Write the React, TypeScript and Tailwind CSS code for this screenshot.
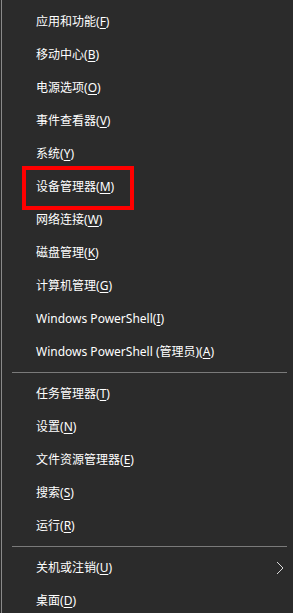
const font = { fontFamily: '"Noto Sans", "Noto Sans CJK SC", sans-serif' }

type Item = { label: string; key: string; arrow?: boolean }

const group1: Item[] = [
  { label: '应用和功能', key: 'F' },
  { label: '移动中心', key: 'B' },
  { label: '电源选项', key: 'O' },
  { label: '事件查看器', key: 'V' },
  { label: '系统', key: 'Y' },
  { label: '设备管理器', key: 'M' },
  { label: '网络连接', key: 'W' },
  { label: '磁盘管理', key: 'K' },
  { label: '计算机管理', key: 'G' },
  { label: 'Windows PowerShell', key: 'I' },
  { label: 'Windows PowerShell (管理员)', key: 'A' },
]

const group2: Item[] = [
  { label: '任务管理器', key: 'T' },
  { label: '设置', key: 'N' },
  { label: '文件资源管理器', key: 'E' },
  { label: '搜索', key: 'S' },
  { label: '运行', key: 'R' },
]

const group3: Item[] = [
  { label: '关机或注销', key: 'U', arrow: true },
  { label: '桌面', key: 'D' },
]

function Row({ item }: { item: Item }) {
  return (
    <div className="h-[33px] flex items-center pl-[34px] pr-[9px] text-white text-[12px]">
      <span className="flex-1 whitespace-nowrap">
        {item.label}(<span className="underline underline-offset-2">{item.key}</span>)
      </span>
      {item.arrow && (
        <svg width="8" height="14" viewBox="0 0 8 14">
          <path d="M1 1 L7 7 L1 13" fill="none" stroke="#d8d8d8" strokeWidth="1" />
        </svg>
      )}
    </div>
  )
}

function Divider() {
  return <div className="h-px bg-[#7a7a7a] ml-[10px] mr-[6px] my-[4px]" />
}

export default function App() {
  return (
    <div className="w-[293px] h-[613px] overflow-hidden bg-[#2b2b2b] flex" style={font}>
      <div className="w-[1px] bg-[#2b2b2b]" />
      <div className="w-[1px] bg-[#8a8a8a]" />
      <div className="flex-1 relative pt-[5px]">
        {group1.map((i) => (
          <Row key={i.key} item={i} />
        ))}
        <Divider />
        {group2.map((i) => (
          <Row key={i.key} item={i} />
        ))}
        <Divider />
        {group3.map((i) => (
          <Row key={i.key} item={i} />
        ))}
        <div className="absolute left-[20px] top-[166px] w-[112px] h-[44px] border-[4px] border-[#ff0000]" />
      </div>
    </div>
  )
}
